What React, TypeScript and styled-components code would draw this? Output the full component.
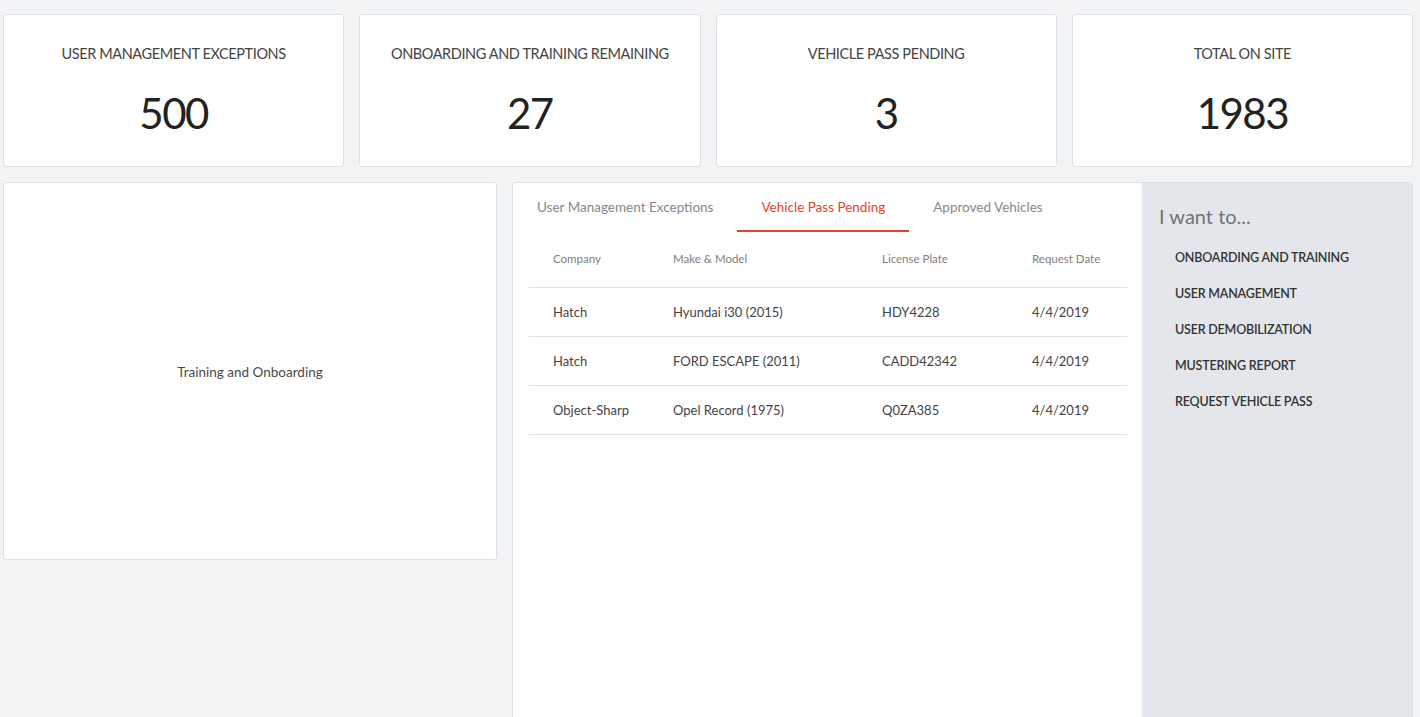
import React from "react";
import styled, { createGlobalStyle } from "styled-components";

const Global = createGlobalStyle`
  html, body { margin: 0; padding: 0; background: #f2f3f5; }
  body { font-family: "Source Sans Pro", Lato, "Noto Sans", sans-serif; color: #333; }
  * { box-sizing: border-box; }
`;

const Page = styled.div`
  padding: 14px 7px 0 3px;
  display: flex;
  flex-direction: column;
  gap: 15px;
  height: 717px;
  overflow: hidden;
`;

const StatRow = styled.div`
  display: grid;
  grid-template-columns: repeat(4, 1fr);
  gap: 15px;
`;

const Card = styled.div`
  background: #fff;
  border: 1px solid #dde0e4;
  border-radius: 3px;
`;

const StatCard = styled(Card)`
  height: 153px;
  display: flex;
  flex-direction: column;
  align-items: center;
  padding-top: 29px;
`;

const StatLabel = styled.div`
  font-size: 14.5px;
  letter-spacing: -0.4px;
  line-height: 20px;
  color: #444;
  text-transform: uppercase;
`;

const StatValue = styled.div`
  margin-top: 21px;
  font-size: 42px;
  letter-spacing: -1.5px;
  line-height: 56px;
  color: #222;
`;

const MainRow = styled.div`
  display: grid;
  grid-template-columns: 494px 1fr;
  gap: 15px;
  align-items: start;
`;

const PlaceholderCard = styled(Card)`
  height: 378px;
  display: flex;
  align-items: center;
  justify-content: center;
  font-size: 13.5px;
  color: #4a4a4a;
  padding-top: 1px;
`;

const SplitCard = styled(Card)`
  height: 560px;
  display: grid;
  grid-template-columns: 1fr 270px;
  overflow: hidden;
`;

const TablePane = styled.div`
  display: flex;
  flex-direction: column;
`;

const Tabs = styled.div`
  display: flex;
`;

const Tab = styled.div<{ $active?: boolean }>`
  padding: 15px 24px 14px;
  font-size: 13.5px;
  line-height: 18px;
  color: ${(p) => (p.$active ? "#e8412f" : "#888")};
  border-bottom: 2px solid ${(p) => (p.$active ? "#e8412f" : "transparent")};
`;

const Table = styled.table`
  margin: 0 15px 0 16px;
  border-collapse: collapse;
`;

const Th = styled.th<{ $w?: string }>`
  text-align: left;
  font-weight: 400;
  font-size: 11.5px;
  line-height: 15px;
  color: #808080;
  padding: 19px 0 21px 24px;
  width: ${(p) => p.$w || "auto"};
  border-bottom: 1px solid #dfe1e4;
`;

const Td = styled.td`
  font-size: 13px;
  color: #444;
  padding: 0 0 0 24px;
  height: 49px;
  border-bottom: 1px solid #dfe1e4;
`;

const SidePane = styled.div`
  background: #e3e7eb;
  padding: 20px 15px 20px 17px;
`;

const SideTitle = styled.div`
  font-size: 20px;
  line-height: 26px;
  color: #6f7479;
  margin-bottom: 11px;
`;

const SideList = styled.ul`
  list-style: none;
  margin: 0;
  padding: 0 0 0 16px;
`;

const SideItem = styled.li`
  font-size: 12.5px;
  font-weight: 600;
  letter-spacing: -0.2px;
  line-height: 36px;
  color: #333;
  text-transform: uppercase;
`;

const stats = [
  { label: "User Management Exceptions", value: "500" },
  { label: "Onboarding and Training Remaining", value: "27" },
  { label: "Vehicle Pass Pending", value: "3" },
  { label: "Total On Site", value: "1983" },
];

const rows = [
  ["Hatch", "Hyundai i30 (2015)", "HDY4228", "4/4/2019"],
  ["Hatch", "FORD ESCAPE (2011)", "CADD42342", "4/4/2019"],
  ["Object-Sharp", "Opel Record (1975)", "Q0ZA385", "4/4/2019"],
];

const actions = [
  "Onboarding and Training",
  "User Management",
  "User Demobilization",
  "Mustering Report",
  "Request Vehicle Pass",
];

export default function App() {
  return (
    <>
      <Global />
      <Page>
        <StatRow>
          {stats.map((s) => (
            <StatCard key={s.label}>
              <StatLabel>{s.label}</StatLabel>
              <StatValue>{s.value}</StatValue>
            </StatCard>
          ))}
        </StatRow>
        <MainRow>
          <PlaceholderCard>Training and Onboarding</PlaceholderCard>
          <SplitCard>
            <TablePane>
              <Tabs>
                <Tab>User Management Exceptions</Tab>
                <Tab $active>Vehicle Pass Pending</Tab>
                <Tab>Approved Vehicles</Tab>
              </Tabs>
              <Table>
                <thead>
                  <tr>
                    <Th $w="120px">Company</Th>
                    <Th $w="209px">Make &amp; Model</Th>
                    <Th $w="150px">License Plate</Th>
                    <Th>Request Date</Th>
                  </tr>
                </thead>
                <tbody>
                  {rows.map((r, i) => (
                    <tr key={i}>
                      {r.map((c, j) => (
                        <Td key={j}>{c}</Td>
                      ))}
                    </tr>
                  ))}
                </tbody>
              </Table>
            </TablePane>
            <SidePane>
              <SideTitle>I want to...</SideTitle>
              <SideList>
                {actions.map((a) => (
                  <SideItem key={a}>{a}</SideItem>
                ))}
              </SideList>
            </SidePane>
          </SplitCard>
        </MainRow>
      </Page>
    </>
  );
}
